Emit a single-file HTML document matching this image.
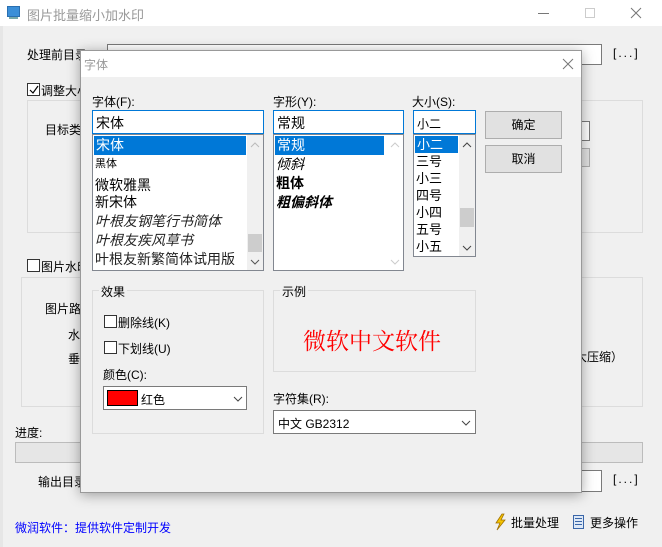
<!DOCTYPE html>
<html><head><meta charset="utf-8"><style>
*{margin:0;padding:0;box-sizing:border-box}
body{width:662px;height:547px;background:#f0f0f0;font-family:"Liberation Sans","Noto Sans CJK SC",sans-serif;font-size:12px;color:#000;position:relative;overflow:hidden}
.a{position:absolute;white-space:nowrap}
.inp{position:absolute;background:#fff;border:1px solid #7a7a7a}
.grp{position:absolute;border:1px solid #dcdcdc}
.cb{position:absolute;width:13px;height:13px;border:1px solid #333;background:#fff}
.btn{position:absolute;background:#e1e1e1;border:1px solid #adadad;text-align:center}
.list{position:absolute;background:#fff;border:1px solid #828790;overflow:hidden}
.sb{position:absolute;right:0;top:0;bottom:0;width:16px;background:#f0f0f0}
.row{height:19px;line-height:19px;padding-left:2px;font-size:14px}
.sel{background:#0078d7;color:#fff}
</style></head><body>
<div class="a" style="left:0;top:0;width:662px;height:26px;background:#fff"></div>
<div class="a" style="left:7px;top:6px;width:13px;height:11px;background:#3b8fd8;border:1px solid #2a6fb0"></div>
<div class="a" style="left:9px;top:17px;width:9px;height:2px;background:#7aa"></div>
<div class="a" style="left:27px;top:5px;color:#999;font-size:13px">图片批量缩小加水印</div>
<div class="a" style="left:538px;top:13px;width:11px;height:1px;background:#777"></div>
<div class="a" style="left:585px;top:8px;width:10px;height:10px;border:1px solid #ccc"></div>
<svg class="a" style="left:630px;top:7px" width="12" height="12"><path d="M1 1L11 11M11 1L1 11" stroke="#777" stroke-width="1"/></svg>
<div class="a" style="left:0;top:26px;width:3px;height:521px;background:#e6e6e6"></div>

<div class="a" style="left:27px;top:46px">处理前目录</div>
<div class="inp" style="left:107px;top:44px;width:495px;height:21px"></div>
<div class="a" style="left:613px;top:46px;letter-spacing:2px">[...]</div>
<div class="cb" style="left:27px;top:83px"><svg class="a" style="left:1px;top:1px" width="10" height="10"><path d="M1 5L4 8L9 1" stroke="#000" fill="none" stroke-width="1.2"/></svg></div>
<div class="a" style="left:41px;top:82px">调整大小</div>
<div class="grp" style="left:27px;top:100px;width:616px;height:133px"></div>
<div class="a" style="left:45px;top:121px">目标类</div>
<div class="inp" style="left:560px;top:121px;width:30px;height:20px"></div>
<div class="a" style="left:560px;top:148px;width:30px;height:19px;background:#e1e1e1;border:1px solid #adadad"></div>
<div class="cb" style="left:27px;top:259px"></div>
<div class="a" style="left:41px;top:258px">图片水印</div>
<div class="grp" style="left:21px;top:277px;width:622px;height:130px"></div>
<div class="a" style="left:45px;top:300px">图片路</div>
<div class="a" style="left:68px;top:326px">水</div>
<div class="a" style="left:68px;top:350px">垂</div>
<div class="a" style="left:575px;top:348px">大压缩）</div>
<div class="a" style="left:15px;top:424px">进度:</div>
<div class="a" style="left:15px;top:442px;width:628px;height:21px;background:#e6e6e6;border:1px solid #bcbcbc"></div>
<div class="a" style="left:38px;top:473px">输出目录</div>
<div class="inp" style="left:560px;top:470px;width:42px;height:22px"></div>
<div class="a" style="left:613px;top:472px;letter-spacing:2px">[...]</div>
<div class="a" style="left:15px;top:519px;color:#0000ff">微润软件：提供软件定制开发</div>
<svg class="a" style="left:493px;top:513px" width="14" height="18" viewBox="0 0 14 18"><path d="M9 1 L3 10 L7 10 L4 17 L12 7 L8 7 L11 1Z" fill="#f5c400" stroke="#a07000" stroke-width="0.8"/></svg>
<div class="a" style="left:511px;top:514px">批量处理</div>
<div class="a" style="left:573px;top:515px;width:11px;height:14px;background:#dde8f6;border:1px solid #3a66a8"></div>
<div class="a" style="left:575px;top:518px;width:7px;height:1px;background:#3a66a8;box-shadow:0 3px #3a66a8,0 6px #3a66a8"></div>
<div class="a" style="left:590px;top:514px">更多操作</div>

<div class="a" style="left:80px;top:50px;width:502px;height:443px;background:#f0f0f0;border:1px solid #999;box-shadow:0 2px 12px rgba(0,0,0,.35)">
<div class="a" style="left:0;top:0;width:500px;height:26px;background:#fff"></div>
<div class="a" style="left:3px;top:5px;color:#999;font-size:12px">字体</div>
<svg class="a" style="left:481px;top:7px" width="12" height="12"><path d="M1 1L11 11M11 1L1 11" stroke="#777" stroke-width="1"/></svg>
</div>
<div class="a" style="left:92px;top:93px">字体(F):</div>
<div class="inp" style="left:92px;top:110px;width:172px;height:24px;border-color:#0078d7"><span class="a" style="left:3px;top:2px;font-size:14px">宋体</span></div>
<div class="list" style="left:92px;top:134px;width:172px;height:137px">
<div class="row sel" style="margin:1px 17px 0 1px">宋体</div>
<div class="row" style="font-size:11px">黑体</div>
<div class="row" style="margin-top:2px">微软雅黑</div>
<div class="row" style="margin-top:-2px">新宋体</div>
<div class="row" style="font-style:italic;color:#222">叶根友钢笔行书简体</div>
<div class="row" style="font-style:italic;color:#222">叶根友疾风草书</div>
<div class="row" style="color:#222">叶根友新繁简体试用版</div>
<div class="sb"><svg class="a" style="left:3px;top:7px" width="10" height="6"><path d="M1 5L5 1L9 5" stroke="#bbb" fill="none"/></svg><div class="a" style="left:1px;top:99px;width:14px;height:18px;background:#cdcdcd"></div><svg class="a" style="left:3px;top:124px" width="10" height="6"><path d="M1 1L5 5L9 1" stroke="#555" fill="none"/></svg></div>
</div>
<div class="a" style="left:273px;top:93px">字形(Y):</div>
<div class="inp" style="left:273px;top:110px;width:131px;height:24px;border-color:#0078d7"><span class="a" style="left:3px;top:2px;font-size:14px">常规</span></div>
<div class="list" style="left:273px;top:134px;width:131px;height:137px">
<div class="row sel" style="margin:1px 19px 0 1px">常规</div>
<div class="row" style="font-style:italic">倾斜</div>
<div class="row" style="font-weight:bold">粗体</div>
<div class="row" style="font-weight:bold;font-style:italic">粗偏斜体</div>
<div class="sb" style="background:#fff"><svg class="a" style="left:3px;top:7px" width="10" height="6"><path d="M1 5L5 1L9 5" stroke="#ccc" fill="none"/></svg><svg class="a" style="left:3px;top:124px" width="10" height="6"><path d="M1 1L5 5L9 1" stroke="#ccc" fill="none"/></svg></div>
</div>
<div class="a" style="left:412px;top:93px">大小(S):</div>
<div class="inp" style="left:413px;top:110px;width:63px;height:24px;border-color:#0078d7"><span class="a" style="left:3px;top:4px">小二</span></div>
<div class="list" style="left:413px;top:134px;width:63px;height:123px">
<div class="row sel" style="margin:1px 17px 0 1px;height:17px;line-height:17px;font-size:13px">小二</div>
<div class="row" style="height:17px;line-height:17px;font-size:13px">三号</div>
<div class="row" style="height:17px;line-height:17px;font-size:13px">小三</div>
<div class="row" style="height:17px;line-height:17px;font-size:13px">四号</div>
<div class="row" style="height:17px;line-height:17px;font-size:13px">小四</div>
<div class="row" style="height:17px;line-height:17px;font-size:13px">五号</div>
<div class="row" style="height:17px;line-height:17px;font-size:13px">小五</div>
<div class="sb"><svg class="a" style="left:3px;top:7px" width="10" height="6"><path d="M1 5L5 1L9 5" stroke="#444" fill="none"/></svg><div class="a" style="left:1px;top:73px;width:14px;height:19px;background:#cdcdcd"></div><svg class="a" style="left:3px;top:110px" width="10" height="6"><path d="M1 1L5 5L9 1" stroke="#444" fill="none"/></svg></div>
</div>
<div class="btn" style="left:485px;top:111px;width:77px;height:28px;line-height:26px">确定</div>
<div class="btn" style="left:485px;top:145px;width:77px;height:28px;line-height:26px">取消</div>
<div class="grp" style="left:92px;top:290px;width:172px;height:144px"></div>
<div class="a" style="left:99px;top:283px;background:#f0f0f0;padding:0 2px">效果</div>
<div class="cb" style="left:104px;top:315px"></div>
<div class="a" style="left:118px;top:314px">删除线(K)</div>
<div class="cb" style="left:104px;top:341px"></div>
<div class="a" style="left:118px;top:340px">下划线(U)</div>
<div class="a" style="left:103px;top:366px">颜色(C):</div>
<div class="inp" style="left:103px;top:386px;width:144px;height:24px"><div class="a" style="left:3px;top:3px;width:31px;height:16px;background:#ff0000;border:1px solid #000"></div><span class="a" style="left:37px;top:4px">红色</span><svg class="a" style="left:129px;top:9px" width="10" height="6"><path d="M1 1L5 5L9 1" stroke="#444" fill="none"/></svg></div>
<div class="grp" style="left:273px;top:290px;width:203px;height:82px"></div>
<div class="a" style="left:280px;top:283px;background:#f0f0f0;padding:0 2px">示例</div>
<div class="a" style="left:303px;top:323px;color:#ff0000;font-size:23px;font-family:'Noto Serif CJK SC',serif">微软中文软件</div>
<div class="a" style="left:273px;top:390px">字符集(R):</div>
<div class="inp" style="left:273px;top:410px;width:203px;height:24px"><span class="a" style="left:4px;top:4px">中文 GB2312</span><svg class="a" style="left:187px;top:9px" width="10" height="6"><path d="M1 1L5 5L9 1" stroke="#444" fill="none"/></svg></div>
</body></html>
